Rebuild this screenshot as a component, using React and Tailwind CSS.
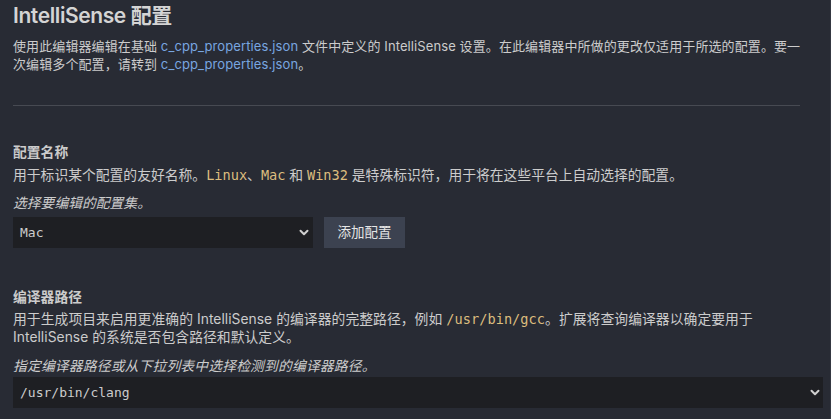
import React from 'react';

const sans = { fontFamily: 'Inter, "Noto Sans CJK SC", sans-serif' };

function Code({ children }) {
  return <span className="font-['DejaVu_Sans_Mono',monospace] text-[13.6px] text-[#dcbd7e]">{children}</span>;
}

function Link({ children }) {
  return <span className="text-[#78a6e0]">{children}</span>;
}

function Chevron() {
  return (
    <svg width="10" height="7" viewBox="0 0 10 7" fill="none">
      <path d="M1.5 1.7l3.5 3.5 3.5-3.5" stroke="#d0d0d0" strokeWidth="2" strokeLinecap="round" strokeLinejoin="round" />
    </svg>
  );
}

export default function App() {
  return (
    <div
      className="w-[831px] h-[419px] overflow-hidden bg-[#282b34] text-[#cccccc] pl-[13px] pr-[8px] border-r border-[#343741]"
      style={sans}
    >
      <h1 className="text-[21px] font-semibold leading-[28px] pt-[2px] text-[#d4d4d4] tracking-[-0.4px]">IntelliSense 配置</h1>
      <p className="text-[13px] leading-[18px] mt-[7px] w-[795px] tracking-[0.1px]">
        使用此编辑器编辑在基础 <Link>c_cpp_properties.json</Link> 文件中定义的 IntelliSense 设置。在此编辑器中所做的更改仅适用于所选的配置。要一
        <br />
        次编辑多个配置，请转到 <Link>c_cpp_properties.json</Link>。
      </p>
      <div className="w-[787px] h-px bg-[#474a52] mt-[32px]" />

      <section className="mt-[37px] text-[13.8px]">
        <h2 className="font-bold leading-[18px]">配置名称</h2>
        <p className="leading-[18px] mt-[5px]">
          用于标识某个配置的友好名称。<Code>Linux</Code>、<Code>Mac</Code> 和 <Code>Win32</Code> 是特殊标识符，用于将在这些平台上自动选择的配置。
        </p>
        <p className="leading-[18px] mt-[10px] italic">选择要编辑的配置集。</p>
        <div className="flex gap-[11px] mt-[5px]">
          <div className="w-[300px] h-[31px] bg-[#1e1f23] flex items-center justify-between pl-[7px] pr-[4px]">
            <span className="font-['DejaVu_Sans_Mono',monospace] text-[13px]">Mac</span>
            <Chevron />
          </div>
          <button className="w-[81px] h-[31px] bg-[#3c4250] text-[13.5px] text-[#e6e6e6]">添加配置</button>
        </div>
      </section>

      <section className="mt-[40px] text-[13.8px]">
        <h2 className="font-bold leading-[18px]">编译器路径</h2>
        <p className="leading-[18px] mt-[4px] w-[800px] tracking-[0.05px]">
          用于生成项目来启用更准确的 IntelliSense 的编译器的完整路径，例如 <Code>/usr/bin/gcc</Code>。扩展将查询编译器以确定要用于
          <br />
          IntelliSense 的系统是否包含路径和默认定义。
        </p>
        <p className="leading-[18px] mt-[11px] italic tracking-[0.15px]">指定编译器路径或从下拉列表中选择检测到的编译器路径。</p>
        <div className="w-[810px] h-[31px] bg-[#1e1f23] flex items-center justify-between pl-[7px] pr-[3px] mt-[2px]">
          <span className="font-['DejaVu_Sans_Mono',monospace] text-[13px]">/usr/bin/clang</span>
          <Chevron />
        </div>
      </section>
    </div>
  );
}
